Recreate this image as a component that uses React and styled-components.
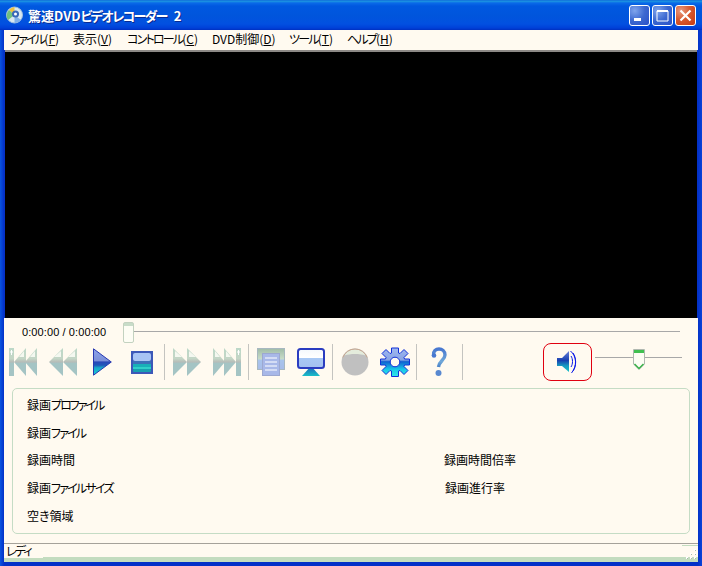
import React from "react";
import styled, { createGlobalStyle } from "styled-components";

const Global = createGlobalStyle`
  html, body { margin: 0; padding: 0; background: #0a3fd0; }
  * { box-sizing: border-box; }
  #root { width: 702px; height: 566px; }
`;
const uiFont = `"Noto Sans CJK JP", "Liberation Sans", sans-serif`;

const Win = styled.div`
  width: 702px; height: 566px; display: flex; flex-direction: column;
  background: linear-gradient(90deg, #0a55e0 0, #0331c8 4px, #0331c8 calc(100% - 4px), #0a44d8 100%);
  padding: 0 4px 4px;
  font: 12px ${uiFont};
  font-feature-settings: "palt";
  color: #000;
`;
const TitleBar = styled.div`
  height: 30px; margin: 0 -4px; flex: none; padding: 0 6px 0 6px;
  display: flex; align-items: center;
  background: linear-gradient(180deg, #0a5ad8 0, #1e9ae0 1px, #0a6ae8 3px, #0058e0 6px, #0055dc 16px, #0250e0 24px, #0040d8 28px, #0030c0 30px);
`;
const TitleText = styled.div`
  flex: 1; color: #fff; font-size: 13px; font-weight: 700; margin-left: 5px; margin-top: 1px; word-spacing: 4px;
  text-shadow: 1px 1px 0 #0a2a90; white-space: nowrap;
`;
const WinBtn = styled.div`
  width: 21px; height: 21px; border: 1px solid #fff; border-radius: 3px; margin-left: 2px;
  display: flex; align-items: center; justify-content: center;
  background: ${p => p.$close
    ? "radial-gradient(circle at 25% 25%, #e89a80 0, #d85a30 45%, #c83a10 100%)"
    : "radial-gradient(circle at 25% 25%, #7fa4ec 0, #3c68d0 50%, #2a50c8 100%)"};
`;
const Kana = styled.span`letter-spacing: ${p => p.$ls ?? -1.8}px;`;
const Menu = styled.div`
  height: 20px; flex: none; background: #fffaf0; display: flex; align-items: center; padding: 0 0 2px 6px;
`;
const MenuItem = styled.div`
  width: ${p => p.$w}px; white-space: nowrap; line-height: 18px;
`;
const Video = styled.div`
  height: 268px; flex: none; margin: 0 1px 0; background: #000; border-top: 2px solid #8d8a86;
`;
const Body = styled.div`
  flex: 1; min-height: 0; background: #fffaf0; display: flex; flex-direction: column;
`;
const SeekRow = styled.div`
  height: 26px; flex: none; display: flex; align-items: center; padding: 0 18px 0 18px;
`;
const TimeText = styled.div`
  width: 101px; font: 11px "Liberation Sans", sans-serif; letter-spacing: 0.1px; margin-top: 1px; white-space: nowrap;
`;
const SeekTrack = styled.div`
  flex: 1; height: 1px; background: #a8a8a8; position: relative;
`;
const SeekThumb = styled.div`
  position: absolute; left: 0; top: -9px; width: 11px; height: 21px;
  background: linear-gradient(180deg, #c8dcc8 0, #c8dcc8 3px, #fdfdf4 3px); border: 1px solid #c3d2c0; border-radius: 2px;
`;
const Toolbar = styled.div`
  height: 36px; flex: none; display: flex; align-items: center; gap: 3.5px; padding: 0 16px 0 1px; position: relative;
`;
const Tool = styled.div`
  width: 36px; height: 36px; flex: none; display: flex; align-items: center; justify-content: center;
`;
const Sep = styled.div`
  width: 1px; height: 36px; background: #c4c4c0; flex: none; margin: 0 0.5px 0 ${p => p.$ml ?? 0}px;
`;
const SpeakerBox = styled.div`
  margin-left: auto; width: 49px; height: 38px; flex: none; border: 1px solid #e00010; border-radius: 8px;
  display: flex; align-items: center; justify-content: center; padding-left: 2px;
`;
const VolTrack = styled.div`
  width: 87px; height: 1px; background: #a8a8a8; margin-left: -0.5px; margin-top: -10px; position: relative; flex: none;
`;
const VolThumb = styled.div`
  position: absolute; left: 38px; top: -8px; line-height: 0;
`;
const Panel = styled.div`
  height: 146px; flex: none; margin: 8px 8px 0 8px; border: 1px solid #c5dcc5; border-radius: 5px;
  display: grid; grid-template-columns: 417px 1fr; grid-auto-rows: 27.7px; padding: 2px 14px 0; align-items: center;
`;
const Label = styled.div`
  grid-column: ${p => p.$col ?? 1}; grid-row: ${p => p.$row};
  margin-left: ${p => p.$ml ?? 0}px; white-space: nowrap; line-height: 16px;
`;
const Status = styled.div`
  margin-top: 9px; flex: 1; min-height: 0; border-top: 1px solid #a5a29a; display: flex; flex-direction: column; position: relative;
`;
const StatusMain = styled.div`flex: 1; display: flex;`;
const StatusText = styled.div`
  width: 39px; padding-left: 2px; line-height: 13px; font-size: 12px; background: #fffaf0; margin-bottom: -1px; z-index: 1;
`;
const Strip = styled.div`height: 5px; flex: none; background: #c3dcbf;`;
const Grip = styled.svg`position: absolute; right: 0; bottom: 0;`;

const Disabled = () => (
  <defs>
    <linearGradient id="dg" x1="0" y1="0" x2="0" y2="1">
      <stop offset="0" stopColor="#bcd8c8" />
      <stop offset=".38" stopColor="#c4d6c6" />
      <stop offset=".5" stopColor="#b6bcb8" />
      <stop offset=".55" stopColor="#a4c4c4" />
      <stop offset="1" stopColor="#a4c4c4" />
    </linearGradient>
  </defs>
);
const Ic = ({ w, h, children, flip }) => (
  <svg width={w} height={h} viewBox={`0 0 ${w} ${h}`} style={flip ? { transform: "scaleX(-1)" } : undefined}>
    <Disabled />
    {children}
  </svg>
);
const TriL = ({ x, w }) => (
  <g>
    <path d={`M${x} 14 L${x + w} 0 V28 Z`} fill="url(#dg)" />
    <path d={`M${x + 5} 9 L${x + w - 2} 3 V9 Z`} fill="#f4f8f0" />
  </g>
);
const PrevI = ({ flip }) => (
  <Ic w={28} h={28} flip={flip}>
    <rect x="0" y="0" width="5" height="28" fill="url(#dg)" />
    <path d="M2.5 2v5M1 4h3" stroke="#fff" strokeWidth="1" />
    <TriL x={5} w={12} />
    <TriL x={16} w={12} />
  </Ic>
);
const RewI = ({ flip }) => (
  <Ic w={28} h={28} flip={flip}>
    <TriL x={0} w={14} />
    <TriL x={14} w={14} />
  </Ic>
);
const PlayI = () => (
  <svg width="19" height="28" viewBox="0 0 19 28">
    <defs>
      <linearGradient id="pl" x1="0" y1="0" x2="0" y2="1">
        <stop offset="0" stopColor="#8ca4ec" /><stop offset=".45" stopColor="#7c90d8" />
        <stop offset=".5" stopColor="#2848b8" /><stop offset=".62" stopColor="#2058b8" />
        <stop offset=".72" stopColor="#18a8c8" /><stop offset="1" stopColor="#18d0d8" />
      </linearGradient>
    </defs>
    <path d="M.5.8 18.3 14 .5 27.2Z" fill="url(#pl)" stroke="#2838b0" strokeWidth="1" />
  </svg>
);
const StopI = () => (
  <svg width="22" height="23" viewBox="0 0 22 23">
    <rect width="22" height="23" fill="#3c58b8" />
    <rect x="2" y="2" width="18" height="8" rx="2" fill="#a8c4f4" />
    <rect x="2" y="10" width="18" height="4" fill="#3c70b8" />
    <rect x="2" y="13" width="18" height="3" fill="#18b0b8" />
    <rect x="2" y="16" width="18" height="2" fill="#30d0c8" />
    <rect x="2" y="18" width="18" height="3" rx="1" fill="#18a0b0" />
  </svg>
);
const DocI = () => (
  <svg width="28" height="28" viewBox="0 0 28 28">
    <defs>
      <linearGradient id="db" x1="0" y1="0" x2="0" y2="1">
        <stop offset="0" stopColor="#a0bca8" /><stop offset=".5" stopColor="#c8dcc8" />
        <stop offset=".55" stopColor="#a8c4ec" /><stop offset="1" stopColor="#a8bce8" />
      </linearGradient>
    </defs>
    <rect x=".5" y=".5" width="27" height="21" fill="url(#db)" stroke="#a8b8c0" />
    <rect x="5.5" y="5.5" width="17" height="22" fill="#a8b8e8" stroke="#9ca8d0" />
    <path d="M8 10h12M8 14h12M8 18h12M8 22h12" stroke="#fff" strokeWidth="1.2" />
  </svg>
);
const MonI = () => (
  <svg width="28" height="28" viewBox="0 0 28 28">
    <defs>
      <linearGradient id="sc" x1="0" y1="0" x2="0" y2="1">
        <stop offset="0" stopColor="#f4f8fc" /><stop offset=".45" stopColor="#fff" />
        <stop offset=".5" stopColor="#a8c8f4" /><stop offset="1" stopColor="#a4c0f0" />
      </linearGradient>
      <linearGradient id="st" x1="0" y1="0" x2="0" y2="1">
        <stop offset="0" stopColor="#2058b8" /><stop offset="1" stopColor="#18c0c8" />
      </linearGradient>
    </defs>
    <path d="M14 18 L23 28 H5Z" fill="url(#st)" />
    <rect x="1" y="1" width="26" height="19" rx="2.5" fill="url(#sc)" stroke="#2a3cc0" strokeWidth="2" />
  </svg>
);
const RecI = () => (
  <svg width="28" height="28" viewBox="0 0 28 28">
    <circle cx="14" cy="14" r="13.5" fill="#c0c0c0" />
    <path d="M3.500 7.500A12 12 0 0 1 24.500 7.500C19 5.500 9 5.500 3.500 7.500Z" fill="#e4ecdc" />
    <path d="M1.800 9.500A13 13 0 0 1 26.200 9.500" fill="none" stroke="#c8a890" strokeWidth="1" />
  </svg>
);
const GearI = () => (
  <svg width="30" height="30" viewBox="0 0 30 30">
    <defs>
      <linearGradient id="ge" x1="0" y1="0" x2="0" y2="1">
        <stop offset="0" stopColor="#a0b8f0" /><stop offset=".42" stopColor="#88a4e4" />
        <stop offset=".48" stopColor="#1060d0" /><stop offset=".75" stopColor="#18c8e8" />
        <stop offset="1" stopColor="#30e8e8" />
      </linearGradient>
    </defs>
    <path d="M11.500 1H18.500V6L20 6.500 24 2.500 28 6.500 24 10.500 24.500 12H29.500V18H24.500L24 19.500 28 23.500 24 27.500 20 23.500 18.500 24V29.500H11.500V24L10 23.500 6 27.500 2 23.500 6 19.500 5.500 18H.5V12H5.500L6 10.500 2 6.500 6 2.500 10 6.500 11.500 6Z" fill="url(#ge)" stroke="#1030d8" strokeWidth="1" />
    <circle cx="15" cy="15" r="4.800" fill="#fffaf0" stroke="#1030d8" strokeWidth="1" />
  </svg>
);
const HelpI = () => (
  <svg width="16" height="30" viewBox="0 0 16 30">
    <defs>
      <linearGradient id="he" x1="0" y1="0" x2="0" y2="1">
        <stop offset="0" stopColor="#4878d0" /><stop offset=".7" stopColor="#70a8d8" /><stop offset="1" stopColor="#4880c8" />
      </linearGradient>
    </defs>
    <path d="M2.500 8.500C2 4 5 2 8 2s6 2 6 6c0 5-6 6-6.500 12" fill="none" stroke="url(#he)" strokeWidth="3.400" />
    <circle cx="3" cy="8.500" r="2.300" fill="#4878d0" />
    <circle cx="7.500" cy="26" r="3" fill="#5888d0" />
  </svg>
);
const SpeakerI = () => (
  <svg width="23" height="24" viewBox="0 0 23 24">
    <defs>
      <linearGradient id="sp" x1="0" y1="0" x2="0" y2="1">
        <stop offset="0" stopColor="#6880d8" /><stop offset=".45" stopColor="#1840b0" />
        <stop offset=".7" stopColor="#1898c0" /><stop offset="1" stopColor="#18c0c8" />
      </linearGradient>
    </defs>
    <path d="M0 8H5L12 1V22L5 16H0Z" fill="url(#sp)" />
    <path d="M14 6c2 3 2 8 0 11M16 3c3.500 5 3.500 13 0 18M13.500 1c6 5 7 15 1 22" fill="none" stroke="#0818e8" strokeWidth="1" />
  </svg>
);
const VolI = () => (
  <svg width="12" height="21" viewBox="0 0 12 21">
    <path d="M.5.5H11.500V15L6 20.500.5 15Z" fill="#fdfdf4" stroke="#b0b8b0" />
    <rect x="1" y="1" width="10" height="3" fill="#40c050" />
    <path d="M1.500 15 6 19.500 10.500 15" fill="none" stroke="#38b048" strokeWidth="1.500" />
  </svg>
);
const AppI = () => (
  <svg width="17" height="18" viewBox="0 0 17 18" style={{ flex: "none" }}>
    <circle cx="8.500" cy="9" r="8" fill="#d8e8f0" stroke="#a0c0e0" />
    <path d="M8.500 9 3 4A8 8 0 0 1 8.500 1Z" fill="#f0c040" />
    <path d="M8.500 9 3 4A8 8 0 0 0 2 14Z" fill="#70c080" />
    <path d="M8.500 9V17A8 8 0 0 0 15 14Z" fill="#80b0e8" />
    <circle cx="9.500" cy="8" r="3.500" fill="#3868b8" />
    <circle cx="9.500" cy="8" r="1.500" fill="#fff" />
  </svg>
);

const U = styled.u`text-decoration: underline; text-underline-offset: 1px;`;

export default function App() {
  return (
    <Win>
      <Global />
      <TitleBar>
        <AppI />
        <TitleText>驚速DVD<Kana $ls={-1.6}>ビデオレコーダー</Kana> 2</TitleText>
        <WinBtn>
          <svg width="19" height="19" viewBox="0 0 19 19"><rect x="4" y="12" width="7" height="3" fill="#fff" /></svg>
        </WinBtn>
        <WinBtn>
          <svg width="19" height="19" viewBox="0 0 19 19"><path d="M4 5H15V15H4Z" fill="none" stroke="#fff" /><rect x="4" y="4" width="11" height="2" fill="#fff" /></svg>
        </WinBtn>
        <WinBtn $close>
          <svg width="19" height="19" viewBox="0 0 19 19"><path d="M4.500 4.500 14.500 14.500M14.500 4.500 4.500 14.500" stroke="#fff" strokeWidth="2.200" /></svg>
        </WinBtn>
      </TitleBar>
      <Menu>
        <MenuItem $w={63}><Kana>ファイル</Kana>(<U>F</U>)</MenuItem>
        <MenuItem $w={54}>表示(<U>V</U>)</MenuItem>
        <MenuItem $w={85}><Kana>コントロール</Kana>(<U>C</U>)</MenuItem>
        <MenuItem $w={77}>DVD制御(<U>D</U>)</MenuItem>
        <MenuItem $w={58}><Kana>ツール</Kana>(<U>T</U>)</MenuItem>
        <MenuItem $w={60}><Kana>ヘルプ</Kana>(<U>H</U>)</MenuItem>
      </Menu>
      <Video />
      <Body>
        <SeekRow>
          <TimeText>0:00:00 / 0:00:00</TimeText>
          <SeekTrack><SeekThumb /></SeekTrack>
        </SeekRow>
        <Toolbar>
          <Tool><PrevI /></Tool>
          <Tool><RewI /></Tool>
          <Tool><PlayI /></Tool>
          <Tool><StopI /></Tool>
          <Sep $ml={1} />
          <Tool><RewI flip /></Tool>
          <Tool><PrevI flip /></Tool>
          <Sep />
          <Tool><DocI /></Tool>
          <Tool><MonI /></Tool>
          <Sep />
          <Tool><RecI /></Tool>
          <Tool><GearI /></Tool>
          <Sep />
          <Tool><HelpI /></Tool>
          <Sep $ml={1} />
          <SpeakerBox><SpeakerI /></SpeakerBox>
          <VolTrack><VolThumb><VolI /></VolThumb></VolTrack>
        </Toolbar>
        <Panel>
          <Label $row={1}>録画<Kana $ls={-2}>プロファイル</Kana></Label>
          <Label $row={2}>録画<Kana>ファイル</Kana></Label>
          <Label $row={3}>録画時間</Label>
          <Label $row={3} $col={2}>録画時間倍率</Label>
          <Label $row={4}>録画<Kana>ファイルサイズ</Kana></Label>
          <Label $row={4} $col={2} $ml={1}>録画進行率</Label>
          <Label $row={5}>空き領域</Label>
        </Panel>
        <Status>
          <StatusMain><StatusText><Kana>レディ</Kana></StatusText></StatusMain>
          <Strip />
          <Grip width="16" height="17" viewBox="0 0 16 17">
            <rect x="0" y="0" width="16" height="1" fill="#c3dcbf" />
            <path d="M12 4h2v2h-2zM12 8h2v2h-2zM8 8h2v2h-2zM12 12h2v2h-2zM8 12h2v2h-2zM4 12h2v2h-2z" fill="#fff" />
            <path d="M13 5h1v1h-1zM13 9h1v1h-1zM9 9h1v1h-1zM13 13h1v1h-1zM9 13h1v1h-1zM5 13h1v1h-1z" fill="#a8b8a8" />
          </Grip>
        </Status>
      </Body>
    </Win>
  );
}
